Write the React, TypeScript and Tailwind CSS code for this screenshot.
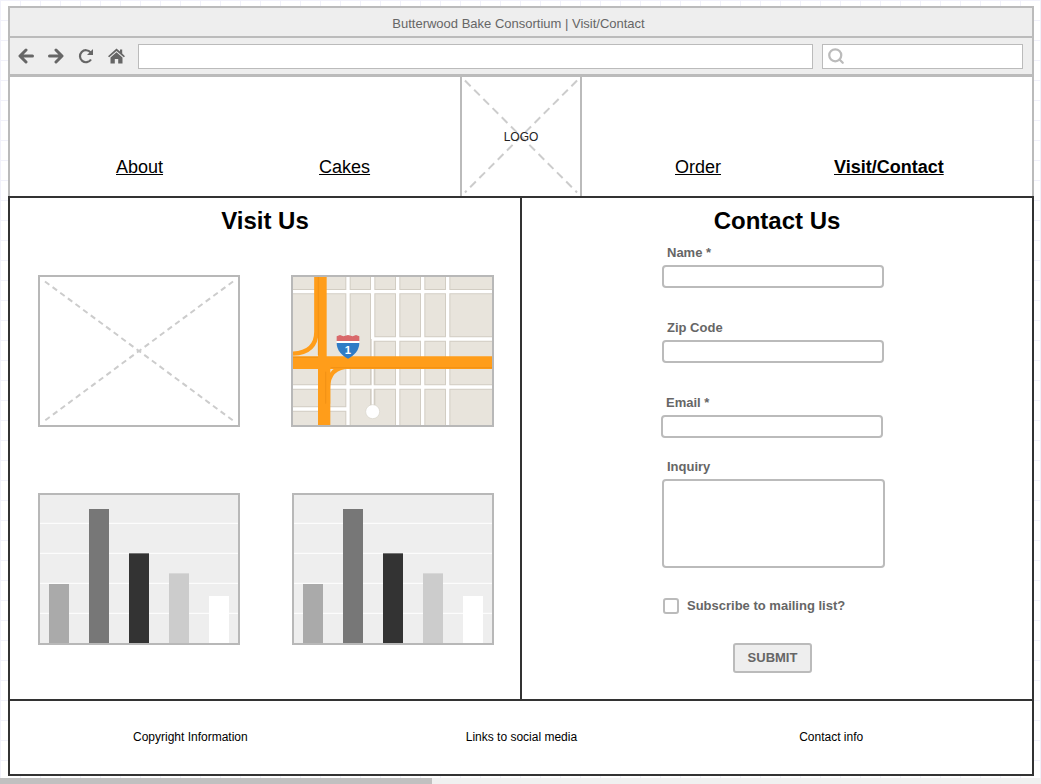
import { Search } from "lucide-react";

const font = "font-['Liberation_Sans',Arial,sans-serif]";

function Placeholder({ className, dash = "5.5 4" }: { className: string; dash?: string }) {
  return (
    <svg className={className} width="100%" height="100%" viewBox="0 0 100 100" preserveAspectRatio="none">
      <line x1="2.5" y1="3" x2="97.5" y2="97" stroke="#ccc" strokeWidth="2" strokeDasharray={dash} vectorEffect="non-scaling-stroke" />
      <line x1="97.5" y1="3" x2="2.5" y2="97" stroke="#ccc" strokeWidth="2" strokeDasharray={dash} vectorEffect="non-scaling-stroke" />
    </svg>
  );
}

function BarChart() {
  const bars = [
    { x: 57, top: 297, fill: "#aaaaaa" },
    { x: 177, top: 72, fill: "#777777" },
    { x: 297, top: 205, fill: "#333333" },
    { x: 417, top: 265, fill: "#cccccc" },
    { x: 537, top: 333, fill: "#ffffff" },
  ];
  return (
    <div className="border-2 border-[#b8b8b8] bg-[#eeeeee] h-[152px] w-[202px]">
      <svg width="198" height="148" viewBox="30 30 594 444" className="block">
        {[115, 205, 295, 385].map((y) => (
          <line key={y} x1="30" x2="624" y1={y} y2={y} stroke="#fff" strokeWidth="3" />
        ))}
        {bars.map((b) => (
          <rect key={b.x} x={b.x} y={b.top} width="60" height={480 - b.top} fill={b.fill} />
        ))}
      </svg>
    </div>
  );
}

function MapPic() {
  const roads = [
    "M204 36V480",
    "M353 36V480",
    "M428 36V480",
    "M503 36V480",
    "M39 80H636",
    "M278 222H636",
    "M39 366H636",
    "M39 432H204",
  ];
  return (
    <div className="border-2 border-[#b8b8b8] h-[152px] w-[203px] -ml-px">
      <svg width="199" height="148" viewBox="39 36 597 444" className="block bg-[#e8e4dc]">
        {roads.map((d) => (
          <path key={d} d={d} stroke="#d2cdc3" strokeWidth="16" fill="none" />
        ))}
        <path d="M278 36V440" stroke="#d2cdc3" strokeWidth="16" fill="none" />
        {roads.map((d) => (
          <path key={d + "w"} d={d} stroke="#fff" strokeWidth="10" fill="none" />
        ))}
        <path d="M278 36V222" stroke="#fff" strokeWidth="10" fill="none" />
        <path d="M278 222V440" stroke="#fff" strokeWidth="6" fill="none" />
        <circle cx="278" cy="440" r="21" fill="#fff" stroke="#d8d4cb" strokeWidth="2" />
        <path d="M109 36V200Q109 262 39 266" stroke="#ff9d1a" strokeWidth="13" fill="none" />
        <path d="M210 305Q144 305 144 370V416" stroke="#ff9d1a" strokeWidth="13" fill="none" />
        <path d="M114 36H140V274H636V312H151V480H114V312H39V274H114Z" fill="#ff9d1a" />
        <path d="M115 36V270M39 277H114M152 308H636M137 320V416" stroke="#ec8c12" strokeWidth="2" fill="none" />
        <path d="M170 214L180 210L190 214L204 210L218 214L228 210L238 214V228H170Z" fill="#d9696b" />
        <path d="M170 228H238V234H170Z" fill="#fff" />
        <path d="M170 234H238C238 256 222 272 204 281C186 272 170 256 170 234Z" fill="#2f7cc6" />
        <text x="204" y="266" textAnchor="middle" fill="#fff" fontSize="34" fontWeight="700" fontFamily="Liberation Sans, Arial, sans-serif">1</text>
      </svg>
    </div>
  );
}

function Field({ label, className = "", labelClass = "pl-[5px]" }: { label: string; className?: string; labelClass?: string }) {
  return (
    <div className={className}>
      <div className={`${labelClass} text-[13px] leading-[14px] font-bold text-[#666]`}>{label}</div>
      <input className="block mt-[5px] w-[222px] h-[23px] border-2 border-[#bbb] rounded-[4px] bg-white" />
    </div>
  );
}

function ToolbarIcons() {
  return (
    <div className="flex items-center gap-[14px] w-[120px]">
      <svg width="16" height="16" viewBox="0 0 16 16" fill="none" stroke="#666" strokeWidth="3" strokeLinecap="round" strokeLinejoin="round">
        <path d="M8 2L2 8L8 14M2.5 8H14.5" />
      </svg>
      <svg width="16" height="16" viewBox="0 0 16 16" fill="none" stroke="#666" strokeWidth="3" strokeLinecap="round" strokeLinejoin="round">
        <path d="M8 2L14 8L8 14M13.5 8H1.5" />
      </svg>
      <svg width="16" height="16" viewBox="0 0 16 16">
        <path d="M12.6 4.4A6 6 0 1 0 13 11.5" fill="none" stroke="#666" strokeWidth="2.2" />
        <path d="M15 1V7H9Z" fill="#666" />
      </svg>
      <svg width="17" height="16" viewBox="0 0 17 16" fill="#666">
        <path d="M8.5 0.5L12 3.6V1.5H14.2V5.6L17 8.2L15.8 9.3L8.5 2.9L1.2 9.3L0 8.2Z" />
        <path d="M8.5 4.2L14.5 9.4V15.5H10.2V11H6.8V15.5H2.5V9.4Z" />
      </svg>
    </div>
  );
}

export default function App() {
  return (
    <div className={`${font} w-[1041px] h-[784px] overflow-hidden bg-white bg-[linear-gradient(#f1f1fa_1px,transparent_1px),linear-gradient(90deg,#f1f1fa_1px,transparent_1px)] bg-[size:20px_20px] pt-[6px]`}>
      <div className="ml-[8px] w-[1026px]">
        {/* browser chrome */}
        <div className="border-2 border-b-0 border-[#bbb] bg-[#eeeeee]">
          <div className="h-[30px] flex items-center justify-center pt-[3px] pr-[5px] text-[13px] text-[#666] border-b-2 border-[#bbb]">
            Butterwood Bake Consortium | Visit/Contact
          </div>
          <div className="h-[36px] flex items-center pl-[8px] pr-[9px] text-[#666] border-b-[3px] border-[#bbb] box-content">
            <ToolbarIcons />
            <div className="w-[675px] h-[25px] bg-white border border-[#bbb]" />
            <div className="ml-[9px] w-[201px] h-[25px] bg-white border border-[#bbb] flex items-center pl-[4px]">
              <Search size={18} strokeWidth={3} className="text-[#bbb]" />
            </div>
          </div>
        </div>

        {/* site header */}
        <div className="h-[119px] bg-white border-x-2 border-[#bbb] flex text-lg text-black">
          <div className="w-[450px] flex items-end pb-[18px]">
            <a className="underline ml-[106px] leading-[21px]">About</a>
            <a className="underline ml-[156px] leading-[21px]">Cakes</a>
          </div>
          <div className="relative w-[122px] border-x-2 border-[#bbb] flex items-center justify-center">
            <Placeholder className="absolute inset-0" dash="8 5" />
            <span className="relative text-xs text-[#222]">LOGO</span>
          </div>
          <div className="flex items-end pb-[18px]">
            <a className="underline ml-[93px] leading-[21px]">Order</a>
            <a className="underline font-bold ml-[113px] leading-[21px]">Visit/Contact</a>
          </div>
        </div>

        {/* main */}
        <div className="h-[505px] bg-white border-2 border-[#333] flex">
          <div className="w-[510px] border-r-2 border-[#333] box-content">
            <h1 className="mt-[9px] text-center text-2xl leading-[28px] font-bold text-black">Visit Us</h1>
            <div className="mt-[40px] ml-[28px] grid grid-cols-[202px_202px] gap-x-[52px] gap-y-[66px]">
              <div className="relative border-2 border-[#b8b8b8] h-[152px] w-[202px]">
                <Placeholder className="absolute inset-0" />
              </div>
              <MapPic />
              <BarChart />
              <BarChart />
            </div>
          </div>
          <div className="flex-1 pl-[140px]">
            <h1 className="mt-[9px] -ml-[140px] text-center text-2xl leading-[28px] font-bold text-black">Contact Us</h1>
            <Field label="Name *" className="mt-[11px]" />
            <Field label="Zip Code" className="mt-[33px]" />
            <Field label="Email *" className="mt-[33px] -ml-px" />
            <div className="mt-[22px]">
              <div className="pl-[5px] text-[13px] leading-[14px] font-bold text-[#666]">Inquiry</div>
              <textarea className="block mt-[5px] w-[223px] h-[89px] border-2 border-[#bbb] rounded-[4px] bg-white resize-none" />
            </div>
            <div className="mt-[30px] flex items-center h-[16px] pl-px">
              <span className="w-[16px] h-[16px] border-2 border-[#bbb] rounded-[3px] bg-white" />
              <span className="ml-[8px] text-[13px] font-bold text-[#666]">Subscribe to mailing list?</span>
            </div>
            <button className="block mt-[29px] ml-[71px] w-[79px] h-[30px] border-2 border-[#bbb] rounded-[3px] bg-[#eeeeee] text-[13px] font-bold text-[#666]">
              SUBMIT
            </button>
          </div>
        </div>

        {/* footer */}
        <div className="h-[75px] bg-white border-x-2 border-b-2 border-[#333] flex items-center pb-[2px] text-xs text-black">
          <span className="ml-[123px]">Copyright Information</span>
          <span className="ml-[218px]">Links to social media</span>
          <span className="ml-[222px]">Contact info</span>
        </div>
      </div>

      {/* page scrollbar */}
      <div className="mt-[2px] h-[6px] bg-[#f0f0f0]">
        <div className="h-full w-[432px] bg-[#c0c0c0]" />
      </div>
    </div>
  );
}
